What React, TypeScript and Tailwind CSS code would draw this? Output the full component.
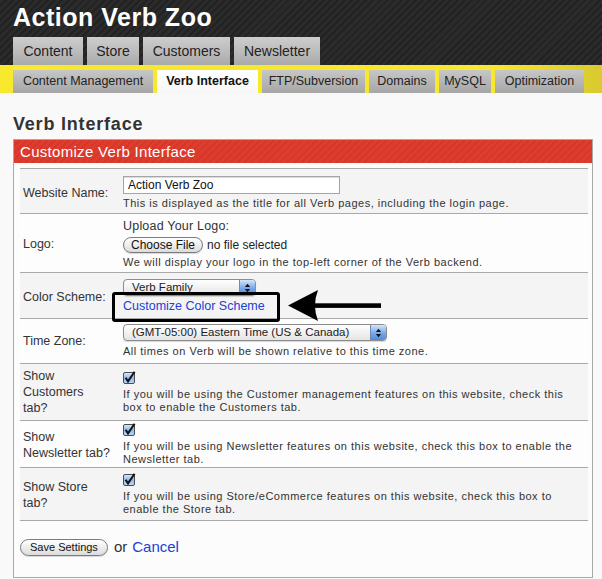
import type { ReactNode } from 'react'

const mainTabs = [
  { label: 'Content', w: 'w-[70px]' },
  { label: 'Store', w: 'w-[52px]' },
  { label: 'Customers', w: 'w-[87px]' },
  { label: 'Newsletter', w: 'w-[86px]' },
]

const subTabs = [
  { label: 'Content Management', w: 'w-[140px]' },
  { label: 'Verb Interface', w: 'w-[101px]', active: true },
  { label: 'FTP/Subversion', w: 'w-[103px]' },
  { label: 'Domains', w: 'w-[66px]' },
  { label: 'MySQL', w: 'w-[52px]' },
  { label: 'Optimization', w: 'w-[89px]' },
]

function Checkbox() {
  return (
    <svg width="13" height="13" viewBox="0 0 13 13" className="block">
      <defs>
        <linearGradient id="cbfill" x1="0" y1="0" x2="0" y2="1">
          <stop offset="0" stopColor="#dceafb" />
          <stop offset="0.5" stopColor="#8fb9ee" />
          <stop offset="1" stopColor="#bcd8f8" />
        </linearGradient>
      </defs>
      <rect x="0.5" y="1.5" width="11" height="11" rx="1.5" fill="url(#cbfill)" stroke="#4d4d4d" />
      <path d="M2.6 6.8 L5 10.4 L11.6 0.8" stroke="#111" strokeWidth="2" fill="none" />
    </svg>
  )
}

function Select({ value, w }: { value: string; w: string }) {
  return (
    <div className={`flex h-[17px] ${w} items-center overflow-hidden rounded-[4px] border border-[#8c8c8c] bg-[linear-gradient(#ffffff,#e4e4e4)] shadow-[0_1px_1px_rgba(0,0,0,0.15)]`}>
      <span className="flex-1 truncate pl-[8px] text-[11.5px] leading-[15px] text-[#222]">{value}</span>
      <span className="flex h-full w-[16px] items-center justify-center border-l border-[#6d8bb3] bg-[linear-gradient(#d3e5fb,#76a8ea_55%,#4f8be0)]">
        <svg width="7" height="10" viewBox="0 0 7 10">
          <path d="M3.5 0.8 L6.2 4 L0.8 4 Z M3.5 9.2 L6.2 6 L0.8 6 Z" fill="#151515" />
        </svg>
      </span>
    </div>
  )
}

function Desc({ children }: { children: ReactNode }) {
  return <p className="whitespace-nowrap text-[11px] leading-[13px] tracking-[0.5px] text-[#333]">{children}</p>
}

function Row({ label, shade, pad, last, children }: {
  label: ReactNode
  shade?: boolean
  pad: string
  last?: boolean
  children: ReactNode
}) {
  return (
    <div className={`relative flex items-center border-t border-[#a9a9a9] ${shade ? 'bg-[#f4f4f4]' : 'bg-[#fdfdfd]'} ${pad} ${last ? 'border-b' : ''}`}>
      <div className="w-[103px] shrink-0 pl-[3px] text-[12.5px] leading-[16px] text-[#333]">{label}</div>
      <div className="flex-1">{children}</div>
    </div>
  )
}

export default function App() {
  return (
    <div className="min-h-[579px] w-[602px] bg-[#f9f9f9] font-['Liberation_Sans',Arial,sans-serif]">
      {/* Header */}
      <div className="bg-[repeating-linear-gradient(135deg,#2b2b2b_0px,#2b2b2b_3px,#222222_3px,#222222_5px)] px-[13px] pt-[2px]">
        <h1 className="text-[25px] font-bold leading-[30px] tracking-[0.5px] text-white">Action Verb Zoo</h1>
        <div className="mt-[5px] flex gap-[4px]">
          {mainTabs.map(t => (
            <div
              key={t.label}
              className={`${t.w} flex h-[28px] items-center justify-center bg-[linear-gradient(#cdcdcd,#b9b9b9_60%,#a9a9a9)] text-[14px] text-[#222]`}
            >
              {t.label}
            </div>
          ))}
        </div>
      </div>

      {/* Sub navigation */}
      <div className="flex gap-[4px] bg-[linear-gradient(to_right,#f9e92d_0%,#f7e72d_82%,#d8ca30_100%)] px-[13px] pt-[5px]">
        {subTabs.map(t => (
          <div
            key={t.label}
            className={`${t.w} flex h-[23px] items-center justify-center text-[12.5px] ${
              t.active
                ? 'bg-[linear-gradient(#ffffff,#f7f7f7)] font-bold text-[#111]'
                : 'bg-[linear-gradient(#c7c7c7,#b3b3b3_60%,#a6a6a6)] text-[#222]'
            }`}
          >
            {t.label}
          </div>
        ))}
      </div>

      {/* Page */}
      <div className="px-[13px] pb-[2px]">
        <h2 className="pt-[19px] text-[18px] font-bold leading-[24px] tracking-[0.8px] text-[#333]">Verb Interface</h2>

        <div className="mt-[3px] w-[580px] border border-[#a9a9a9] bg-[#fcfcfc]">
          <div className="h-[23px] bg-[repeating-linear-gradient(135deg,#de3c2d_0px,#de3c2d_3px,#d5382a_3px,#d5382a_5px)] pl-[6px] text-[15px] leading-[23px] tracking-[0.3px] text-white">
            Customize Verb Interface
          </div>

          <div className="ml-[6px] mr-[4px] mt-[5px]">
            <Row label="Website Name:" shade pad="pt-[7px] pb-[3px]">
              <div className="flex h-[18px] w-[217px] items-center border border-[#a5a5a5] bg-white pl-[4px] text-[12px] text-[#111] shadow-[inset_0_1px_1px_rgba(0,0,0,0.15)]">
                Action Verb Zoo
              </div>
              <div className="mt-[3px]">
                <Desc>This is displayed as the title for all Verb pages, including the login page.</Desc>
              </div>
            </Row>

            <Row label="Logo:" pad="pt-[5px] pb-[3px]">
              <div className="text-[12.5px] leading-[15px] tracking-[0.2px] text-[#333]">Upload Your Logo:</div>
              <div className="mt-[3px] flex h-[16px] items-center">
                <span className="flex h-[16px] items-center rounded-full border border-[#7b7b7b] bg-[linear-gradient(#ffffff,#dcdcdc)] px-[7px] text-[12px] leading-[14px] text-[#111] shadow-[0_1px_1px_rgba(0,0,0,0.15)]">
                  Choose File
                </span>
                <span className="ml-[4px] text-[12px] leading-[16px] text-[#222]">no file selected</span>
              </div>
              <div className="mt-[3px]">
                <Desc>We will display your logo in the top-left corner of the Verb backend.</Desc>
              </div>
            </Row>

            <Row label="Color Scheme:" shade pad="pt-[6px] pb-[4px]">
              <Select value="Verb Family" w="w-[133px]" />
              <a className="mt-[2px] block text-[12.5px] leading-[16px] text-[#2140d4]">Customize Color Scheme</a>
              <div className="absolute left-[92px] top-[19px] z-10 h-[30px] w-[168px] rounded-[3px] border-[3px] border-black" />
              <svg className="absolute left-[268px] top-[16px] z-10" width="94" height="34" viewBox="0 0 94 34">
                <path d="M0 16.5 L30 1 Q24 16.5 30 32 Z" fill="#000" />
                <rect x="22" y="14.3" width="71" height="4.6" fill="#000" />
              </svg>
            </Row>

            <Row label="Time Zone:" pad="pt-[5px] pb-[5px]">
              <Select value="(GMT-05:00) Eastern Time (US & Canada)" w="w-[264px]" />
              <div className="mt-[4px]">
                <Desc>All times on Verb will be shown relative to this time zone.</Desc>
              </div>
            </Row>

            <Row label={<>Show<br />Customers<br />tab?</>} shade pad="pt-[4px] pb-[4px]">
              <Checkbox />
              <div className="mt-[4px]">
                <Desc>
                  If you will be using the Customer management features on this website, check this<br />
                  box to enable the Customers tab.
                </Desc>
              </div>
            </Row>

            <Row label={<>Show<br />Newsletter tab?</>} pad="pt-[2px] pb-[1px]">
              <Checkbox />
              <div className="mt-[4px]">
                <Desc>
                  If you will be using Newsletter features on this website, check this box to enable the<br />
                  Newsletter tab.
                </Desc>
              </div>
            </Row>

            <Row label={<>Show Store<br />tab?</>} shade last pad="pt-[5px] pb-[4px]">
              <Checkbox />
              <div className="mt-[4px]">
                <Desc>
                  If you will be using Store/eCommerce features on this website, check this box to<br />
                  enable the Store tab.
                </Desc>
              </div>
            </Row>
          </div>

          <div className="mt-[15px] flex items-center pb-[18px] pl-[6px]">
            <span className="flex h-[17px] items-center rounded-full border border-[#7b7b7b] bg-[linear-gradient(#ffffff,#dcdcdc)] px-[9px] text-[11px] text-[#111] shadow-[0_1px_1px_rgba(0,0,0,0.15)]">
              Save Settings
            </span>
            <span className="ml-[6px] text-[15px] text-[#333]">or</span>
            <a className="ml-[5px] text-[15px] text-[#2140d4]">Cancel</a>
          </div>
        </div>
      </div>
    </div>
  )
}
